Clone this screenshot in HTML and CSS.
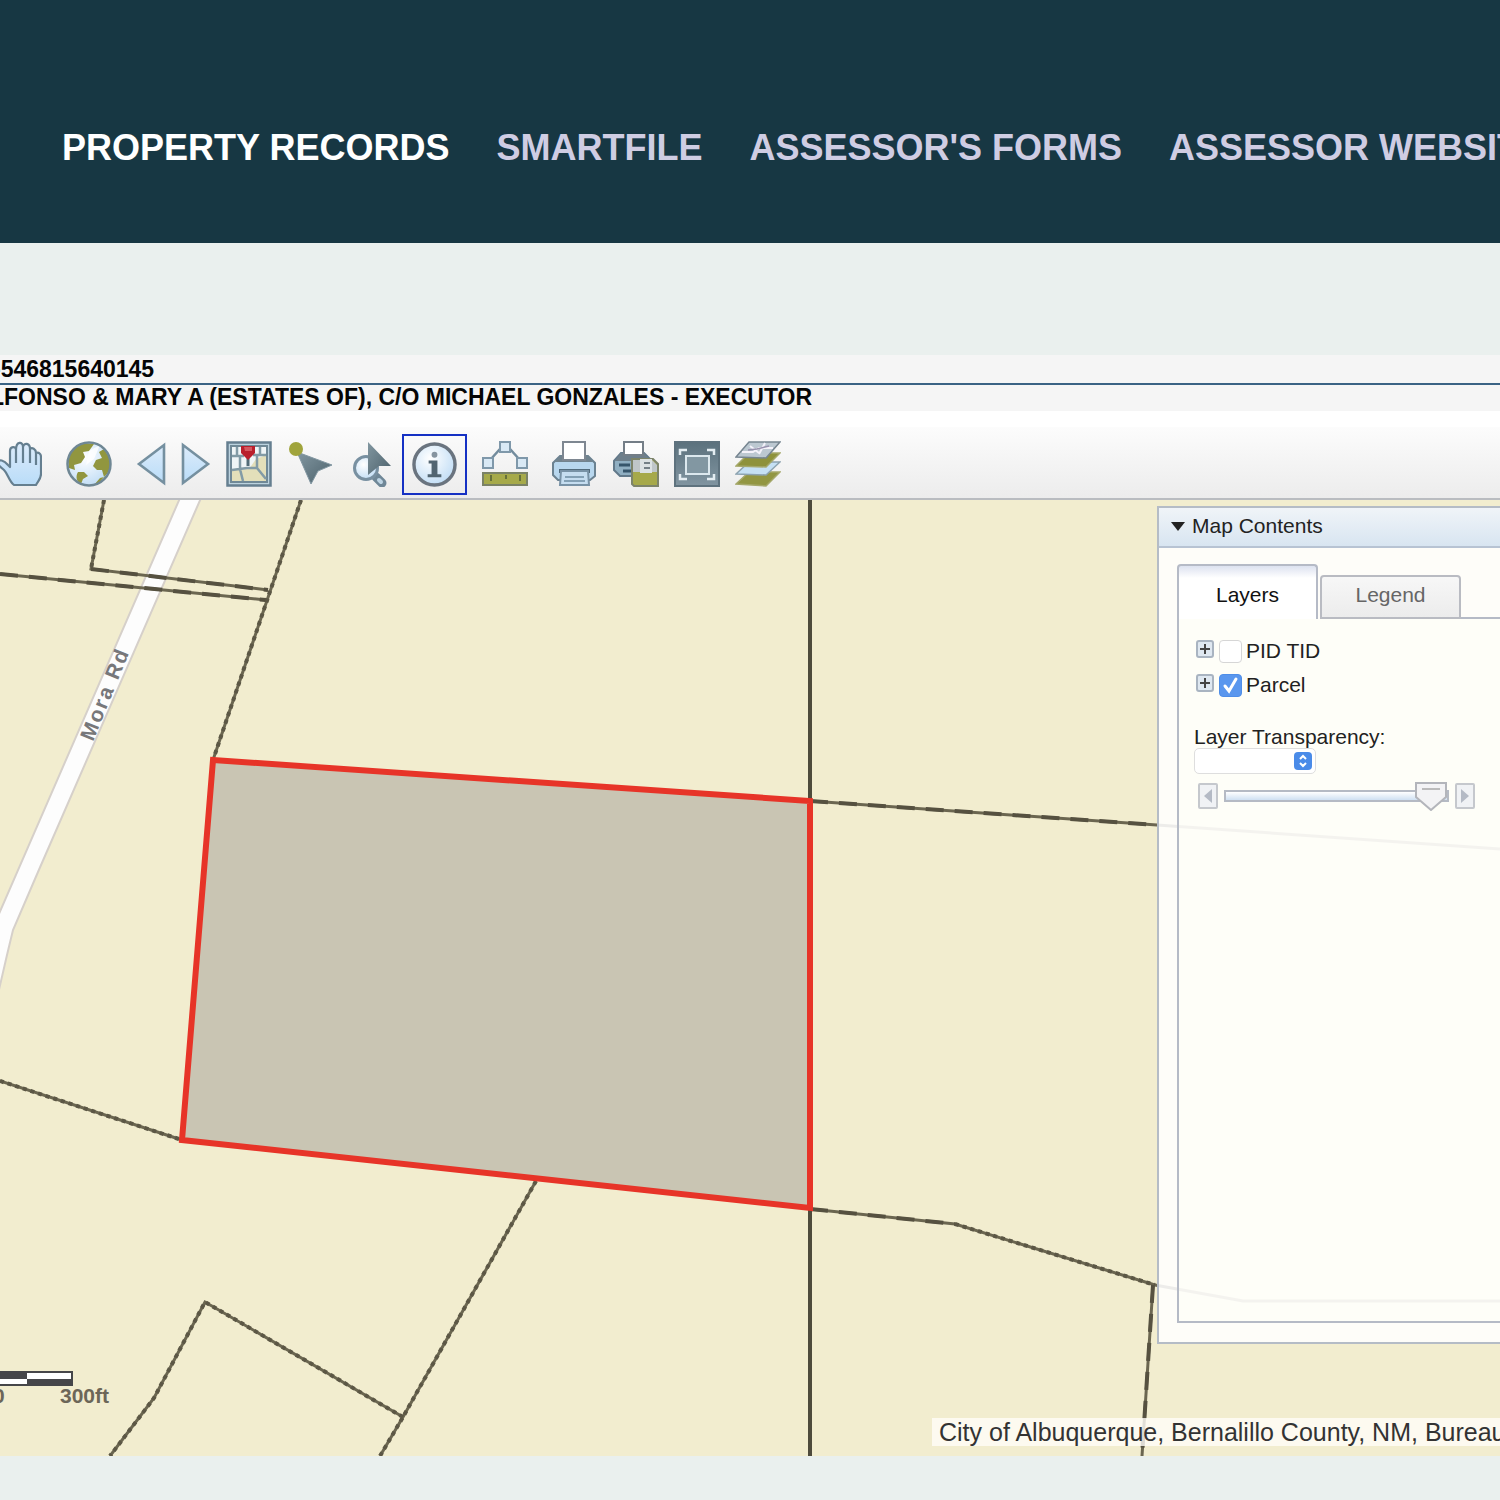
FILE: index.html
```html
<!DOCTYPE html>
<html lang="en">
<head>
<meta charset="utf-8">
<title>Property Records</title>
<link rel="stylesheet" href="styles.css">
</head>
<body>
<svg class="defs" width="0" height="0" aria-hidden="true">
  <defs>
    <linearGradient id="ice" x1="0" y1="0" x2="0" y2="1"><stop offset="0" stop-color="#ddecfb"/><stop offset="1" stop-color="#b9dcf8"/></linearGradient>
    <linearGradient id="steel" x1="0" y1="0" x2="1" y2="1"><stop offset="0" stop-color="#8297a1"/><stop offset="1" stop-color="#4c616b"/></linearGradient>
    <linearGradient id="screen" x1="0" y1="0" x2="0" y2="1"><stop offset="0" stop-color="#5c727e"/><stop offset="1" stop-color="#8094a0"/></linearGradient>
    <radialGradient id="pearl" cx=".4" cy=".35" r=".7"><stop offset="0" stop-color="#fff"/><stop offset="1" stop-color="#bfdcf5"/></radialGradient>
  </defs>
</svg>
<header class="site-header">
  <nav class="site-nav" aria-label="Main">
    <a class="nav-link active" href="#">PROPERTY RECORDS</a>
    <a class="nav-link" href="#">SMARTFILE</a>
    <a class="nav-link" href="#">ASSESSOR'S FORMS</a>
    <a class="nav-link" href="#">ASSESSOR WEBSITE</a>
  </nav>
</header>
<main class="viewer">
  <div class="record">
    <p class="record-line">-546815640145</p>
    <p class="record-line">LFONSO &amp; MARY A (ESTATES OF), C/O MICHAEL GONZALES - EXECUTOR</p>
  </div>
  <div class="toolbar" role="toolbar" aria-label="Map tools">
    <button class="tool group-end" aria-label="Pan">
      <svg viewBox="0 0 46 46"><path d="M18 44C13 40 12 33 8 29C5 26 1 24 1 21C3 18 8 19 12 24L14 26V10C14 5 20 5 20 9C20 0 27 0 27 6C28 1 34 2 34 8C36 6 40 8 40 12C43 11 45 13 45 16V33C45 38 42 40 40 44ZM20 8V22M27 5V22M34 8V22M40 12V24" fill="url(#ice)" stroke="#657f90" stroke-width="2.2" stroke-linejoin="round"/></svg>
    </button>
    <button class="tool group-end" aria-label="Full extent">
      <svg viewBox="0 0 46 46"><circle cx="23" cy="23" r="21.5" fill="url(#pearl)"/><path d="M19 2C10 5 5 9 2 18L3 27L9 29L8 24L15 22L19 16L17 11L23 10L28 3ZM38 8L33 11L36 17L30 19L27 25L31 29H36L38 36C43 32 46 25 43 16ZM12 31L18 31L22 35L17 38L15 43C11 41 9 36 12 31ZM34 37L38 36L33 42L28 44Z" fill="#91963f"/><path d="M23 10L34 4L28 18L20 24Z" fill="#fff" opacity=".8"/><circle cx="23" cy="23" r="21.5" fill="none" stroke="#6f8794" stroke-width="2.5"/></svg>
    </button>
    <button class="tool step" aria-label="Previous extent">
      <svg viewBox="0 0 30 46"><path d="M28 4V42L3 23Z" fill="url(#ice)" stroke="#7590a0" stroke-width="2.6"/></svg>
    </button>
    <button class="tool step" aria-label="Next extent">
      <svg viewBox="0 0 30 46"><path d="M2 4V42L27 23Z" fill="url(#ice)" stroke="#7590a0" stroke-width="2.6"/></svg>
    </button>
    <button class="tool" aria-label="Locate on map">
      <svg viewBox="0 0 46 46"><path d="M1.500 1.500H44.500V44.500H1.500Z" fill="#bcd3df" stroke="#657f90" stroke-width="2.500"/><path d="M5 5H41V41H5Z" fill="#e3dfba" stroke="#708997" stroke-width="2"/><path d="M6 6H40V14L30 18L23 28L6 29Z" fill="#eff5f7"/><path d="M6 15H18M27 14H40M11 6V15M34 6V15M6 29L21 27H31L40 38M14 15V28L17 40M31 27V15" fill="none" stroke="#829ba6" stroke-width="2.500"/><path d="M22 14V25" stroke="#526c78" stroke-width="3"/><path d="M15 5H29V12L22 19L15 12Z" fill="#b91f2c"/><path d="M18 6H26V10H19Z" fill="#d45860"/></svg>
    </button>
    <button class="tool" aria-label="Select point">
      <svg viewBox="0 0 46 46"><path d="M10 11L45 24L31 30L24 43Z" fill="url(#steel)" stroke="#8297a2"/><circle cx="9" cy="8" r="7" fill="#a0a43c"/></svg>
    </button>
    <button class="tool" aria-label="Select and search">
      <svg viewBox="0 0 46 46"><path d="M28 36L34 42" stroke="#6f8797" stroke-width="9" stroke-linecap="round"/><path d="M31 39L33 41" stroke="#bdd4e4" stroke-width="4" stroke-linecap="round"/><circle cx="18" cy="27" r="11.500" fill="url(#pearl)" stroke="#7890a1" stroke-width="3"/><path d="M20 1L43 25H31L20 34Z" fill="url(#steel)"/></svg>
    </button>
    <button class="tool selected" aria-label="Identify" aria-pressed="true">
      <svg viewBox="0 0 46 46"><circle cx="23" cy="23" r="21" fill="url(#pearl)" stroke="#6a747f" stroke-width="3.500"/><circle cx="23" cy="13" r="3" fill="#8694a0"/><path d="M17 19H26V33H30V36H16V33H20V22H17Z" fill="#526571"/></svg>
    </button>
    <button class="tool group-end" aria-label="Measure">
      <svg viewBox="0 0 46 46"><path d="M9 18L18 8H28L37 18" fill="none" stroke="#738c9d" stroke-width="2.500"/><g fill="#d9e9f5" stroke="#7f98aa" stroke-width="2"><path d="M18 1H28V11H18Z"/><path d="M1 17H11V27H1Z"/><path d="M35 17H45V27H35Z"/></g><path d="M1 32H45V44H1Z" fill="#a6aa4a" stroke="#7a8266" stroke-width="2"/><path d="M9 34V40M24 34V38M38 34V40" stroke="#66703a" stroke-width="2"/></svg>
    </button>
    <button class="tool" aria-label="Print">
      <svg viewBox="0 0 46 46"><path d="M8 15H36L43 22V35L38 39H6L1 34V22Z" fill="#b8d7ee" stroke="#6b8291" stroke-width="2"/><path d="M8 15H36L41 21H3Z" fill="#71838e"/><path d="M11 1H33V19H11Z" fill="#fff" stroke="#7e8791" stroke-width="2"/><path d="M7 30H38" stroke="#526b7c" stroke-width="4"/><path d="M9 30H36L37 44H8Z" fill="#c5ddf0" stroke="#7892a6" stroke-width="2"/><path d="M13 36H32M12 40H33" stroke="#83a0b5" stroke-width="2"/></svg>
    </button>
    <button class="tool" aria-label="Save print">
      <svg viewBox="0 0 46 46"><path d="M8 12H31L38 19V32L33 35H7L1 29V20Z" fill="#90afc2" stroke="#62798a" stroke-width="2"/><path d="M8 12H31L38 20H2Z" fill="#6e7f8b"/><path d="M11 1H30V14H11Z" fill="#fff" stroke="#747e87" stroke-width="2"/><path d="M6 24H17M10 30H18" stroke="#36556b" stroke-width="3"/><path d="M19 18H40L45 23V45H21L19 43Z" fill="#a6a94a" stroke="#7d846a" stroke-width="2"/><path d="M20 19H39L44 24V31H20Z" fill="#bfc6c9"/><path d="M27 18H39V32H27Z" fill="#dce2e4"/><path d="M31 22H37M31 27H37" stroke="#748087" stroke-width="2"/></svg>
    </button>
    <button class="tool" aria-label="Full screen">
      <svg viewBox="0 0 46 46"><path d="M0 0H46V46H0Z" fill="#5e727e"/><path d="M2 2H44V44H2Z" fill="url(#screen)"/><path d="M12 15H35V33H12Z" fill="#8297a2" stroke="#dce8ee" stroke-width="2"/><path d="M6 14V9H13M33 9H40V14M6 33V38H13M33 38H40V33" fill="none" stroke="#e4edf2" stroke-width="2.500"/></svg>
    </button>
    <button class="tool" aria-label="Map layers">
      <svg viewBox="0 0 46 46"><g stroke-width="1.500"><path d="M1 43L14 31H45L31 45Z" fill="#929642" stroke="#a5a86a"/><path d="M1 33L14 21H45L31 34Z" fill="#c5e0f4" stroke="#8da3b0"/><path d="M1 25L14 12H45L31 26Z" fill="#8e923b" stroke="#a5a86a"/><path d="M1 16L14 1H45L31 17Z" fill="#bcc8d1" stroke="#768590"/></g><path d="M7 11H18L24 7H38M15 5L24 12M30 2L24 13" fill="none" stroke="#f4f2fa" stroke-width="2"/><path d="M13 9L22 8L34 5" fill="none" stroke="#9892ae" stroke-width="1.500"/></svg>
    </button>
  </div>
  <div class="map">
    <svg class="map-drawing" role="img" aria-label="Parcel map">
      <path class="road" d="M180 -2L-2 416V494L7 455L13 430L38 372L201 -2Z"/>
      <g class="boundary">
        <path d="M104 0L91 69L268 90M0 74L266 100M301 0L213 260M0 581L182 640M536 681L403 917L380 956M403 917L205 802L154 898L110 956M810 301L1157 325L1500 349M810 709L955 724L1155 785L1243 801H1500M1153 785L1142 956"/>
        <path class="long-dash" d="M91 69L268 90M0 74L266 100M810 301L1157 325M810 709L955 724M1153 785L1142 956"/>
        <path class="short-dash" d="M104 0L91 69M301 0L213 260M0 581L182 640M536 681L403 917L380 956M403 917L205 802L154 898L110 956M955 724L1155 785"/>
        <path class="section" d="M810 0V956"/>
      </g>
      <path class="parcel" d="M213 260L810 301V708L182 640Z"/>
      <text class="road-name" transform="translate(93 242) rotate(-68)">Mora Rd</text>
    </svg>
    <div class="scale">
      <div class="scale-bar"><span></span><span></span><span></span><span></span></div>
      <div class="scale-labels"><span>0</span><span>300ft</span></div>
    </div>
    <p class="credits">City of Albuquerque, Bernalillo County, NM, Bureau of Land Management</p>
    <aside class="panel">
      <h2 class="panel-title"><svg class="caret" viewBox="0 0 14 9"><path d="M0 0H14L7 9Z"/></svg>Map Contents</h2>
      <div class="panel-body">
        <div class="tabs" role="tablist">
          <button class="tab current" role="tab" aria-selected="true">Layers</button>
          <button class="tab" role="tab" aria-selected="false">Legend</button>
        </div>
        <div class="tab-page" role="tabpanel">
          <ul class="layers">
            <li class="layer"><button class="expand" aria-label="Expand PID TID"></button><input class="check" type="checkbox" id="pid"><label for="pid">PID TID</label></li>
            <li class="layer"><button class="expand" aria-label="Expand Parcel"></button><input class="check" type="checkbox" id="parcel" checked><label for="parcel">Parcel</label></li>
          </ul>
          <label class="field-label" for="layer">Layer Transparency:</label>
          <select class="layer-select" id="layer"><option></option></select>
          <div class="slider">
            <button class="nudge" aria-label="Decrease"><svg viewBox="0 0 8 14"><path d="M8 0V14L0 7Z"/></svg></button>
            <input class="range" type="range" aria-label="Transparency" value="100">
            <button class="nudge" aria-label="Increase"><svg viewBox="0 0 8 14"><path d="M0 0V14L8 7Z"/></svg></button>
          </div>
        </div>
      </div>
    </aside>
  </div>
</main>
</body>
</html>
```
FILE: styles.css
```css
* { box-sizing: border-box; }

body {
  margin: 0;
  min-height: 100vh;
  display: flex;
  flex-direction: column;
  overflow-x: hidden;
  background: #eaf0ee;
  font-family: "Liberation Sans", Arial, sans-serif;
  font-size: 21px;
  color: #222;
}

button, select, input { font: inherit; color: inherit; margin: 0; padding: 0; }
.defs { position: absolute; }

/* Header */
.site-header {
  background: #173743;
  padding: 124px 0 71px 62px;
  overflow: hidden;
}
.site-nav { display: flex; gap: 47px; }
.nav-link {
  flex: none;
  color: #cfcde3;
  font-size: 36px;
  font-weight: bold;
  line-height: 48px;
  text-decoration: none;
  white-space: nowrap;
}
.nav-link.active { color: #fff; }

/* Record summary */
.viewer {
  flex: 1;
  display: flex;
  flex-direction: column;
  padding: 112px 0 44px;
}
.record { background: #f5f5f5; border-bottom: 16px solid #fff; }
.record-line {
  margin: 0;
  height: 28px;
  text-indent: -7px;
  font-size: 23px;
  font-weight: bold;
  line-height: 28px;
  color: #050505;
  white-space: nowrap;
  overflow: hidden;
}
.record-line + .record-line { border-top: 2px solid #3a6384; text-indent: -10px; line-height: 24px; }

/* Toolbar */
.toolbar {
  height: 73px;
  display: flex;
  align-items: center;
  gap: 15px;
  margin-left: -4px;
  padding-top: 3px;
  border-bottom: 2px solid #b9bcc0;
  background: linear-gradient(#fcfcfc, #ececec);
}
.tool {
  flex: none;
  width: 46px;
  height: 46px;
  border: 0;
  background: none;
}
.tool svg { display: block; width: 100%; height: 100%; }
.tool.step { width: 30px; }
.tool.group-end { margin-right: 9px; }
.tool.selected {
  width: 65px;
  height: 61px;
  margin-left: -7px;
  padding: 6px 8px;
  border: 2px solid #1531c4;
}

/* Map */
.map {
  position: relative;
  flex: 1;
  min-height: 900px;
  overflow: hidden;
  background: #f2edcf;
}
.map-drawing { position: absolute; width: 100%; height: 100%; }
.road { fill: #fdfdfd; stroke: #d6d0ca; stroke-width: 2; }
.boundary path { fill: none; stroke: #6b6650; stroke-width: 3; }
.boundary .long-dash { stroke: #565140; stroke-width: 4; stroke-dasharray: 18 11; }
.boundary .short-dash { stroke: #5c5745; stroke-width: 4; stroke-dasharray: 4 4; }
.boundary .section { stroke: #4e4b3c; stroke-width: 4; }
.parcel { fill: #c9c5b3; stroke: #e73428; stroke-width: 6; }
.road-name {
  fill: #77777a;
  font-size: 21px;
  font-weight: bold;
  letter-spacing: 2px;
}

.scale {
  position: absolute;
  left: -20px;
  bottom: 50px;
  color: #6c6658;
  font-weight: bold;
  line-height: 20px;
}
.scale-bar {
  width: 93px;
  height: 15px;
  display: grid;
  grid-template-columns: 1fr 1fr;
  border: 2px solid #464649;
  background: #464649;
}
.scale-bar span:nth-child(2), .scale-bar span:nth-child(3) { background: #fff; }
.scale-labels { display: flex; justify-content: space-between; width: 129px; padding-left: 13px; }

.credits {
  position: absolute;
  left: 932px;
  right: 0;
  bottom: 10px;
  margin: 0;
  padding-left: 7px;
  overflow: hidden;
  white-space: nowrap;
  background: rgba(255, 253, 248, .8);
  color: #333;
  font-size: 25px;
  line-height: 28px;
}

/* Map contents panel */
.panel {
  position: absolute;
  left: 1157px;
  right: 0;
  top: 6px;
  bottom: 112px;
  display: flex;
  flex-direction: column;
  border: 2px solid #b5bcc6;
  border-right: 0;
  background: rgba(255, 255, 255, .88);
}
.panel-title {
  display: flex;
  align-items: center;
  gap: 7px;
  height: 40px;
  margin: 0;
  padding: 0 12px 2px;
  border-bottom: 2px solid #b7c3d3;
  background: linear-gradient(#f0f4f8, #d8e5f1);
  font-size: 21px;
  font-weight: normal;
}
.caret { width: 14px; height: 9px; fill: #222; }
.panel-body { flex: 1; display: flex; flex-direction: column; padding: 16px 0 19px 18px; }
.tabs { display: flex; align-items: flex-end; gap: 2px; }
.tabs::after { content: ""; flex: 1; height: 2px; margin-left: -2px; background: #b5bac6; }
.tab {
  width: 141px;
  height: 44px;
  padding-bottom: 4px;
  border: 2px solid #b9bbc2;
  border-radius: 4px 4px 0 0;
  background: linear-gradient(#f7f7f7, #ececec);
  color: #666;
}
.tab.current {
  height: 55px;
  padding-top: 8px;
  border-color: #b5bac6;
  border-bottom: 0;
  background: linear-gradient(#dde2f0, #fff 12px);
  color: #111;
}
.tab-page { flex: 1; padding: 15px 25px 0 15px; border: solid #b5bac6; border-width: 0 0 2px 2px; background: rgba(255, 255, 248, .4); }
.layers { margin: 0; padding: 0; list-style: none; }
.layer { display: flex; align-items: center; height: 34px; padding-left: 2px; line-height: 24px; }
.expand {
  width: 18px;
  height: 18px;
  margin: 0 5px 4px 0;
  border: 2px solid #a9b4c1;
  border-radius: 3px;
  background: linear-gradient(#444, #444) center / 10px 2px no-repeat, linear-gradient(#444, #444) center / 2px 10px no-repeat, #dfe8f1;
}
.check {
  appearance: none;
  width: 23px;
  height: 23px;
  margin-right: 4px;
  border: 1px solid #d6d6d6;
  border-radius: 4px;
  background: #fff;
}
.check:checked {
  border-color: #4f8ee8;
  background: #5a97ee url("data:image/svg+xml,%3Csvg xmlns='http://www.w3.org/2000/svg' viewBox='0 0 21 21'%3E%3Cpath d='M5 11l4 5 7-12' fill='none' stroke='white' stroke-width='3' stroke-linecap='round'/%3E%3C/svg%3E") center / contain no-repeat;
}
.field-label { display: block; margin-top: 24px; line-height: 22px; }
.layer-select {
  appearance: none;
  display: block;
  width: 122px;
  height: 26px;
  border: 1px solid #dedede;
  border-radius: 5px;
  background: #fff url("data:image/svg+xml,%3Csvg xmlns='http://www.w3.org/2000/svg' viewBox='0 0 18 18'%3E%3Crect width='18' height='18' rx='4' fill='%234a8be8'/%3E%3Cpath d='M6 7l3-3 3 3M6 11l3 3 3-3' fill='none' stroke='white' stroke-width='2'/%3E%3C/svg%3E") right 3px center / 18px no-repeat;
}
.slider { display: flex; align-items: center; gap: 6px; margin-top: 7px; padding-left: 4px; }
.nudge {
  flex: none;
  width: 20px;
  height: 26px;
  display: grid;
  place-items: center;
  border: 2px solid #c5c8cd;
  border-radius: 2px;
  background: #f0f2f5;
}
.nudge svg { width: 8px; height: 14px; fill: #b4bac5; }
.range {
  appearance: none;
  flex: 1;
  min-width: 0;
  height: 30px;
  background: none;
}
.range::-webkit-slider-runnable-track {
  height: 12px;
  border: 2px solid #b5bac4;
  background: linear-gradient(#fff, #cfe0f2);
}
.range::-webkit-slider-thumb {
  appearance: none;
  width: 32px;
  height: 30px;
  margin-top: -11px;
  background: url("data:image/svg+xml,%3Csvg xmlns='http://www.w3.org/2000/svg' viewBox='0 0 32 30'%3E%3Cpath d='M1 2H31V16L16 29L1 16Z' fill='%23f3f3f5' stroke='%23b3b5bb' stroke-width='2'/%3E%3Cpath d='M7 8H25' stroke='%23bbb' stroke-width='2'/%3E%3C/svg%3E") no-repeat;
}
```
